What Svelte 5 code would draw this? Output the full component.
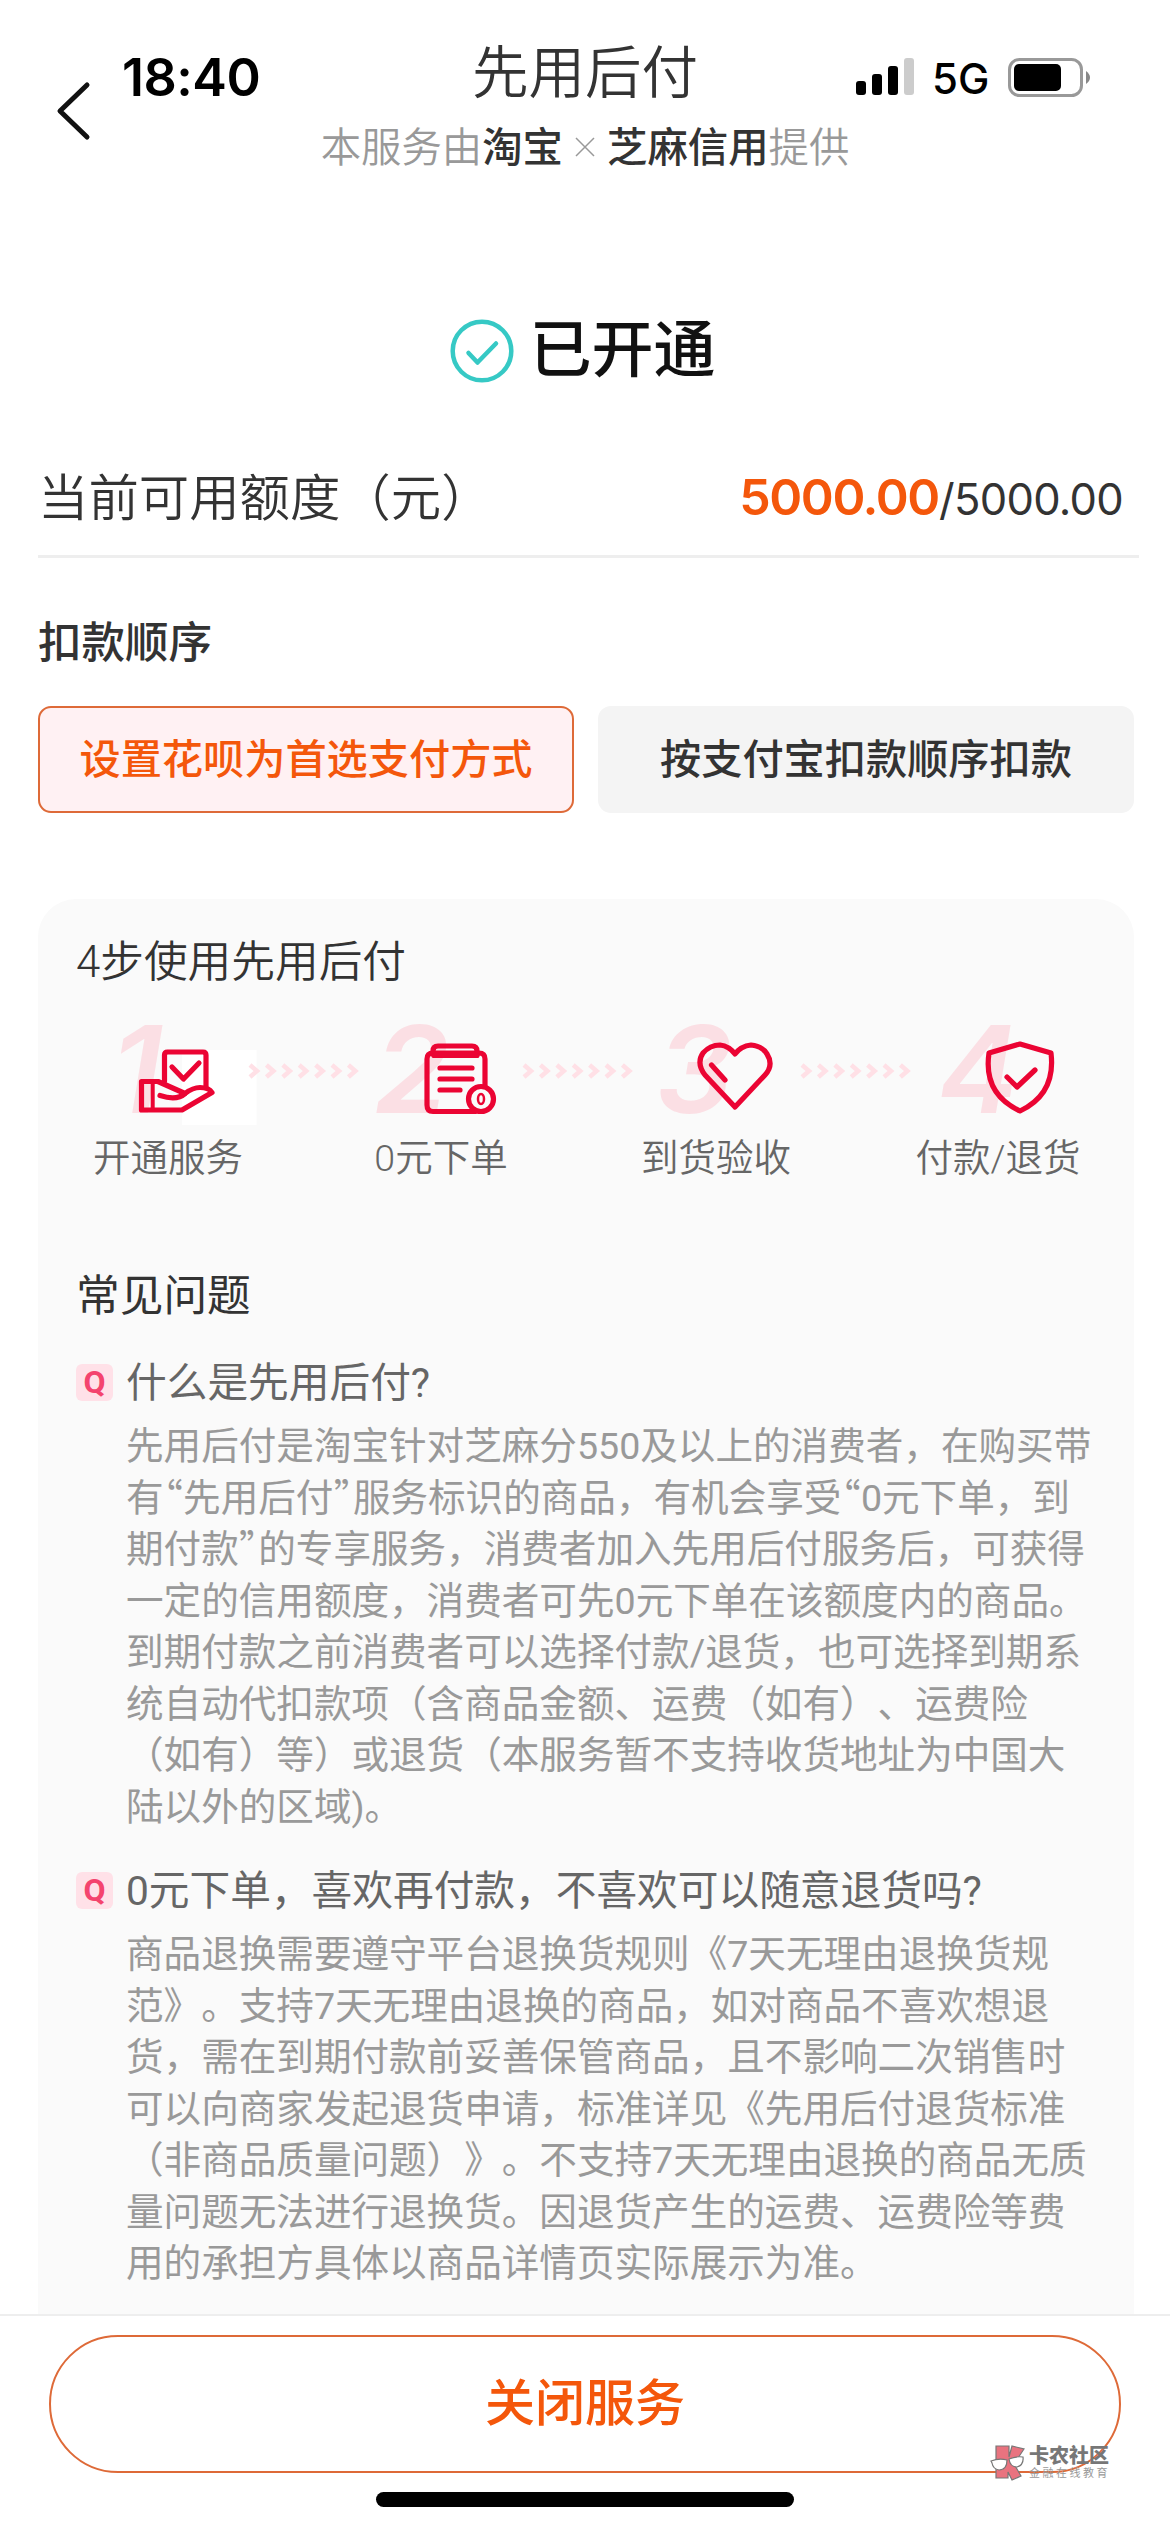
<script>
	const steps = [
		{ id: "open", number: 1, label: "开通服务" },
		{ id: "order", number: 2, label: "0元下单" },
		{ id: "receive", number: 3, label: "到货验收" },
		{ id: "pay", number: 4, label: "付款/退货" }
	];

	const faqs = [
		{
			question: "什么是先用后付?",
			answer: [
				"先用后付是淘宝针对芝麻分550及以上的消费者，在购买带",
				"有“先用后付”服务标识的商品，有机会享受“0元下单，到",
				"期付款”的专享服务，消费者加入先用后付服务后，可获得",
				"一定的信用额度，消费者可先0元下单在该额度内的商品。",
				"到期付款之前消费者可以选择付款/退货，也可选择到期系",
				"统自动代扣款项（含商品金额、运费（如有）、运费险",
				"（如有）等）或退货（本服务暂不支持收货地址为中国大",
				"陆以外的区域)。"
			]
		},
		{
			question: "0元下单，喜欢再付款，不喜欢可以随意退货吗?",
			answer: [
				"商品退换需要遵守平台退换货规则《7天无理由退换货规",
				"范》。支持7天无理由退换的商品，如对商品不喜欢想退",
				"货，需在到期付款前妥善保管商品，且不影响二次销售时",
				"可以向商家发起退货申请，标准详见《先用后付退货标准",
				"（非商品质量问题）》。不支持7天无理由退换的商品无质",
				"量问题无法进行退换货。因退货产生的运费、运费险等费",
				"用的承担方具体以商品详情页实际展示为准。"
			]
		}
	];

	let selected = $state("huabei");

	// quotes are set narrower than the surrounding glyphs
	const splitQuotes = (line) => line.split(/([“”])/);
</script>

<div class="page">
	<header>
		<svg class="back" viewBox="0 0 40 64" fill="none" stroke="#111" stroke-width="5" stroke-linecap="round" stroke-linejoin="round">
			<path d="M33 6 L6 32 L33 58" />
		</svg>
		<span class="time">18:40</span>
		<div class="heading">
			<h1>先用后付</h1>
			<p>
				本服务由<b>淘宝</b><svg class="cross" viewBox="0 0 20 20" stroke="#999" stroke-width="1.5"><path d="M1 1 L19 19 M19 1 L1 19" /></svg><b>芝麻信用</b>提供
			</p>
		</div>
		<div class="status">
			<svg class="signal" viewBox="0 0 58 38">
				<rect x="0" y="23" width="10" height="14" rx="3" />
				<rect x="16" y="16" width="10" height="21" rx="3" />
				<rect x="32" y="8" width="10" height="29" rx="3" />
				<rect x="48" y="0" width="10" height="37" rx="3" fill="#ccc" />
			</svg>
			<span class="network">5G</span>
			<svg class="battery" viewBox="0 0 83 40">
				<rect x="1.5" y="1.5" width="72" height="36" rx="10" fill="none" stroke="#999" stroke-width="3" />
				<rect x="6" y="6" width="47" height="27" rx="5" />
				<path d="M78 13 Q82 16 82 19.500 Q82 23 78 26 Z" fill="#888" />
			</svg>
		</div>
	</header>

	<div class="opened">
		<svg viewBox="0 0 64 64" fill="none" stroke="#36c9c5" stroke-width="4.500" stroke-linecap="round" stroke-linejoin="round">
			<circle cx="32" cy="32" r="29.300" />
			<path d="M18.500 34 L27.500 43.500 L46 24.500" />
		</svg>
		<span>已开通</span>
	</div>

	<div class="quota">
		<span class="quota-label">当前可用额度（元）</span>
		<span class="amount"><b>5000.00</b>/5000.00</span>
	</div>

	<h2>扣款顺序</h2>
	<div class="options">
		<button class:active={selected === "huabei"} onclick={() => (selected = "huabei")}>设置花呗为首选支付方式</button>
		<button class:active={selected === "alipay"} onclick={() => (selected = "alipay")}>按支付宝扣款顺序扣款</button>
	</div>

	<section class="card">
		<h3>4步使用先用后付</h3>
		<div class="steps">
			{#each steps as step, i}
				{#if i > 0}
					<svg class="arrows" viewBox="0 0 112 16" fill="none" stroke="#ffe0e6" stroke-width="4.500">
						{#each Array(7) as _, n}
							<path d="M{2 + n * 16.4} 2 L{9 + n * 16.4} 8 L{2 + n * 16.4} 14" />
						{/each}
					</svg>
				{/if}
				<div class="step">
					<svg class="icon" viewBox="0 0 160 110" fill="none" stroke="#eb0433" stroke-width="5.200" stroke-linecap="round" stroke-linejoin="round">
						{#if step.id === "open"}
							<rect x="94" y="32" width="74.500" height="75" fill="#fff" stroke="none" />
							<text class="number" x="23" y="95">1</text>
							<path d="M76.500 63 V37 Q76.500 34 79.500 34 H115 Q118 34 118 37 V68" />
							<path d="M84 49 L95.500 61 L111 45" />
							<path d="M53.500 63.500 H70 L97 75.500 Q105 69.500 112 69.500 Q121 69.500 124 74.500 L94 92 H53.500 Z" />
							<path d="M64.700 65 V90" stroke-width="4" />
							<path d="M72 77.500 Q89 83 97 75.500" />
						{:else if step.id === "order"}
							<text class="number" x="13" y="95">2</text>
							<path d="M114 92 V93.500 H72 Q66 93.500 66 87 V41 Q66 35 72 35 H118 Q124 35 124 41 V67" />
							<path d="M72 36 V33 Q72 28 77 28 H111 Q116 28 116 33 V36 Z" />
							<path d="M73 37.500 H116" />
							<path d="M79 50 H111 M79 61 H111 M79 72 H99" />
							<circle cx="120" cy="81" r="12.500" />
							<ellipse cx="120" cy="81" rx="3" ry="5" stroke-width="2.500" />
						{:else if step.id === "receive"}
							<text class="number" x="20" y="95">3</text>
							<path d="M99 89 L69 57 Q60 45 67 35 Q74 27 84 27 Q93 28 99 36 Q105 28 115 27 Q126 28 131 36 Q138 47 129 57 Z" />
							<path d="M75.500 47 L89 62" />
						{:else}
							<text class="number" x="20" y="95">4</text>
							<path d="M102 26 L133 35 Q138 76 102 93 Q65 76 71 35 Z" />
							<path d="M89 59 L99 69 L117 52" />
						{/if}
					</svg>
					<span>{step.label}</span>
				</div>
			{/each}
		</div>

		<h3 class="faq-title">常见问题</h3>
		{#each faqs as faq}
			<div class="faq">
				<div class="question">
					<span class="badge">Q</span>
					<span class="question-text">{faq.question}</span>
				</div>
				<div class="answer">
					{#each faq.answer as line}
						<p>{#each splitQuotes(line) as part}{#if part === "“" || part === "”"}<span class="quote">{part}</span>{:else}{part}{/if}{/each}</p>
					{/each}
				</div>
			</div>
		{/each}
	</section>

	<footer>
		<button class="close">关闭服务</button>
		<div class="home-bar"></div>
		<div class="watermark">
			<svg viewBox="0 0 36 36" stroke="#777" stroke-width="1.2">
				<path d="M6 1 H19 V12 L22 1 L34 4 L24 19 L31 31 L22 35 L18 27 V33 H6 Z" fill="#e9737f" />
				<path d="M1 16 Q9 13 17 15 Q17 25 9 25 Q3 24 2 18 Z M19 14 Q26 11 33 12 Q34 20 27 22 Q20 22 19 14 Z" fill="#fff" />
			</svg>
			<div>
				<strong>卡农社区</strong>
				<small>金融在线教育</small>
			</div>
		</div>
	</footer>
</div>

<style>
	:global(body) {
		margin: 0;
		background: #fff;
	}

	.page {
		width: 1170px;
		height: 2532px;
		overflow: hidden;
		display: flex;
		flex-direction: column;
		background: #fff;
		color: #333;
		font-family: Roboto, "Noto Sans CJK SC", sans-serif;
		font-weight: 350;
		white-space: nowrap;
		text-spacing-trim: space-all;
	}

	h1, h2, h3, p {
		margin: 0;
	}

	button {
		box-sizing: border-box;
		padding: 0;
		font-family: inherit;
		font-weight: 500;
	}

	header {
		display: grid;
		grid-template-columns: 122px 192px 542px 1fr;
		height: 319px;
		align-items: start;
	}

	.back {
		width: 40px;
		height: 64px;
		margin: 79px 0 0 54px;
	}

	.time {
		margin-top: 46px;
		color: #000;
		font: 600 52px/64px Inter, sans-serif;
		letter-spacing: -0.5px;
	}

	.heading {
		text-align: center;
	}

	h1 {
		margin-top: 40px;
		font-size: 56.5px;
		font-weight: 350;
		line-height: 68px;
	}

	.heading p {
		margin-top: 17px;
		color: #999;
		font-size: 40.4px;
		line-height: 48px;
	}

	.heading b {
		color: #333;
		font-weight: 500;
	}

	.cross {
		width: 20px;
		height: 20px;
		margin: 0 12px 5px;
	}

	.status {
		display: flex;
		margin: 58px 0 0;
	}

	.signal {
		width: 58px;
		height: 38px;
	}

	.network {
		width: 76px;
		margin-left: 18px;
		color: #000;
		font: 500 42px/42px Inter, sans-serif;
	}

	.battery {
		width: 83px;
		height: 40px;
	}

	.opened {
		display: flex;
		justify-content: center;
		align-items: center;
		gap: 15px;
		height: 64px;
		padding-right: 4px;
		color: #111;
		font-size: 62px;
		font-weight: 500;
	}

	.opened svg {
		width: 64px;
		height: 64px;
	}

	.opened span {
		padding-bottom: 12px;
	}

	.quota {
		display: flex;
		justify-content: space-between;
		align-items: center;
		box-sizing: border-box;
		width: 1101px;
		height: 118px;
		margin: 57px 0 0 38px;
		padding-right: 16px;
		border-bottom: 3px solid #eee;
		font-size: 50.4px;
	}

	.quota-label {
		padding-bottom: 6px;
	}

	.amount {
		font: 400 43.5px/60px Inter, sans-serif;
		letter-spacing: -0.7px;
	}

	.amount b {
		color: #f4570b;
		font-size: 50px;
		font-weight: 600;
		letter-spacing: -1.4px;
	}

	h2 {
		margin: 55px 0 0 38px;
		font-size: 43.5px;
		font-weight: 500;
		line-height: 62px;
	}

	.options {
		display: grid;
		grid-template-columns: 536px 536px;
		gap: 24px;
		margin: 31px 0 0 38px;
	}

	.options button {
		height: 107px;
		padding-bottom: 8px;
		border: 2px solid #f4f4f4;
		border-radius: 13px;
		background: #f4f4f4;
		color: #333;
		font-size: 41.2px;
	}

	.options .active {
		border-color: #de6a38;
		background: #fff1f3;
		color: #f4570b;
	}

	.card {
		box-sizing: border-box;
		width: 1096px;
		height: 1415px;
		margin: 86px 0 0 38px;
		padding: 34px 0 0 38px;
		border-radius: 38px 38px 0 0;
		background: #fafafa;
	}

	h3 {
		font-size: 43.7px;
		font-weight: 350;
		line-height: 58px;
	}

	.steps {
		display: grid;
		grid-template-columns: 160px 113px 160px 115px 160px 122px 160px;
		justify-items: center;
		margin: 27px 0 0 12px;
	}

	.arrows {
		width: 112px;
		height: 16px;
		margin: 45px 2px 0 0;
	}

	.step {
		display: flex;
		flex-direction: column;
		align-items: center;
		color: #666;
		font-size: 37.5px;
		line-height: 54px;
	}

	.icon {
		width: 160px;
		height: 110px;
		margin-bottom: 3px;
		overflow: visible;
	}

	.number {
		fill: #fbdfe4;
		stroke: none;
		font: italic 600 121px Inter, sans-serif;
	}

	.faq-title {
		margin-top: 82px;
		font-weight: 400;
	}

	.faq {
		margin-top: 30px;
	}

	.faq + .faq {
		margin-top: 30px;
	}

	.question {
		display: flex;
		align-items: center;
		gap: 13px;
		height: 54px;
		color: #666;
		font-size: 40.7px;
		font-weight: 400;
	}

	.question-text {
		padding-bottom: 5px;
	}

	.badge {
		width: 37px;
		height: 37px;
		border-radius: 6px;
		background: #ffe1e8;
		color: #f4446e;
		font: 700 32px/37px Roboto, sans-serif;
		text-align: center;
	}

	.answer {
		margin: 12px 0 0 50px;
		color: #999;
		font-size: 37.6px;
		font-weight: 400;
		line-height: 51.5px;
	}

	.answer p {
		height: 51.5px;
	}

	.quote {
		display: inline-block;
		width: 19.5px;
		font-family: "Noto Sans CJK SC", sans-serif;
		font-feature-settings: "halt";
		line-height: 30px;
		text-align: center;
	}

	footer {
		position: relative;
		box-sizing: border-box;
		height: 218px;
		padding: 19px 49px 0;
		border-top: 2px solid #eee;
		background: #fff;
	}

	.close {
		display: block;
		width: 1072px;
		height: 138px;
		padding-bottom: 10px;
		border: 2px solid #de6a38;
		border-radius: 70px;
		background: #fff;
		color: #f4570b;
		font-size: 50px;
	}

	.home-bar {
		width: 418px;
		height: 15px;
		margin: 19px auto 0;
		border-radius: 8px;
		background: #000;
	}

	/* stamp lies over the close button's corner */
	.watermark {
		position: absolute;
		left: 990px;
		top: 129px;
		display: flex;
		gap: 3px;
	}

	.watermark svg {
		width: 36px;
		height: 36px;
	}

	.watermark strong,
	.watermark small {
		display: block;
		color: #777;
		font-size: 20px;
		font-weight: 900;
		line-height: 22px;
	}

	.watermark small {
		color: #999;
		font-size: 11px;
		font-weight: 400;
		line-height: 14px;
		letter-spacing: 2.5px;
	}
</style>
